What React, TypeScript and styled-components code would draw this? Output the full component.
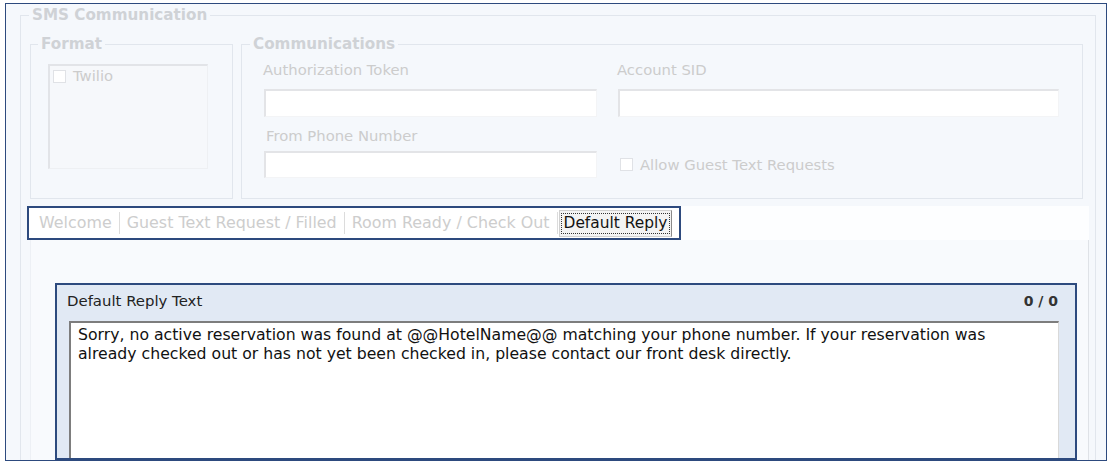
import React from "react";
import styled, { createGlobalStyle } from "styled-components";

const GlobalStyle = createGlobalStyle`
  body {
    margin: 0;
    background: #ffffff;
    font-family: "DejaVu Sans", Verdana, sans-serif;
  }
`;

const Frame = styled.div`
  box-sizing: border-box;
  margin: 3px 0 0 5px;
  width: 1102px;
  height: 458px;
  border: 1px solid #2d4a7e;
  background: #f5f8fc;
  overflow: hidden;
  display: flex;
  flex-direction: column;
`;

const GroupSet = styled.fieldset<{ $pad: string }>`
  margin: 0;
  min-width: 0;
  padding: ${(p) => p.$pad};
  border: 1px solid #e1e6ed;
  display: block;
`;

// offset is measured from the padding edge, so it goes negative when the set is padded
const Legend = styled.legend<{ $offset: number }>`
  margin-left: ${(p) => p.$offset}px;
  padding: 0 3px;
  font-family: "DejaVu Sans", Verdana, sans-serif;
  font-weight: bold;
  font-size: 15.2px;
  line-height: 18px;
  color: #cfd2d6;
`;

const SmsSet = styled(GroupSet)`
  margin: 2px 10px 0 14px;
  flex: 1;
`;

const TopRow = styled.div`
  display: flex;
  gap: 8px;
  height: 164px;
`;

const FormatSet = styled(GroupSet)`
  box-sizing: border-box;
  width: 203px;
`;

const ListBox = styled.div`
  box-sizing: border-box;
  width: 160px;
  height: 105px;
  background: #f6f8fb;
  border-top: 2px solid #e2e4e8;
  border-left: 2px solid #e2e4e8;
  border-right: 1px solid #eef0f3;
  border-bottom: 1px solid #eef0f3;
  padding: 1px 0 0 3px;
`;

const CheckRow = styled.label`
  display: flex;
  align-items: center;
  gap: 7px;
  font-size: 14.8px;
  line-height: 18px;
  color: #cccccc;
`;

const Box = styled.span`
  box-sizing: border-box;
  width: 13px;
  height: 13px;
  background: #ffffff;
  border: 1px solid #e0e2e6;
  flex: none;
`;

const CommSet = styled(GroupSet)`
  box-sizing: border-box;
  flex: 1;
`;

const FieldGrid = styled.div`
  display: grid;
  grid-template-columns: 333px 441px;
  column-gap: 21px;
`;

const Field = styled.div`
  display: flex;
  flex-direction: column;
`;

const FieldLabel = styled.div<{ $gap: number; $shift?: number }>`
  font-size: 14.8px;
  line-height: 18px;
  color: #cccccc;
  margin-left: ${(p) => p.$shift ?? -1}px;
  margin-bottom: ${(p) => p.$gap}px;
`;

const TextBox = styled.div<{ $h: number }>`
  box-sizing: border-box;
  height: ${(p) => p.$h}px;
  background: #ffffff;
  border-top: 2px solid #e3e4e7;
  border-left: 2px solid #e3e4e7;
  border-right: 1px solid #f3f4f6;
  border-bottom: 1px solid #f3f4f6;
`;

const CheckCell = styled.div`
  display: flex;
  align-items: center;
  padding: 0 0 0 2px;
`;

const TabBar = styled.div`
  margin: 7px -6px 0 -3px;
  height: 34px;
  background: #fdfeff;
  display: flex;
`;

const TabList = styled.div`
  box-sizing: border-box;
  width: 654px;
  height: 34px;
  border: 2px solid #2d4a7e;
  background: #ffffff;
  display: flex;
  align-items: center;
  padding-left: 10px;
`;

const Tab = styled.div`
  font-size: 15.9px;
  line-height: 18px;
  color: #cdcdcd;
  padding: 0 7px 0 0;
  margin-right: 7px;
  border-right: 1px solid #dcdcdc;
  height: 22px;
  display: flex;
  align-items: center;
`;

const ActiveTab = styled.div`
  box-sizing: border-box;
  height: 27px;
  margin-left: -6px;
  padding: 2px;
  background: #f3f3f3;
  border: 1px solid #d0d0d0;
  border-right: 1px solid #8a8a8a;
  display: flex;
  align-items: center;
`;

const FocusText = styled.span`
  font-size: 15.4px;
  line-height: 19px;
  color: #111111;
  padding: 0 2px;
  outline: 1px dotted #333333;
`;

const Panel = styled.div`
  margin: 0 -6px 0 0;
  padding: 43px 11px 40px 24px;
  background: #f8fafd;
  border-left: 1px solid #edf0f5;
  border-right: 1px solid #dfe2e7;
`;

const ReplyGroup = styled.div`
  box-sizing: border-box;
  height: 177px;
  border: 2px solid #2d4a7e;
  background: #e1e9f4;
  display: flex;
  flex-direction: column;
`;

const ReplyHeader = styled.div`
  display: flex;
  justify-content: space-between;
  padding: 7px 17px 0 10px;
  height: 18px;
  line-height: 18px;
  color: #222222;
`;

const HeaderTitle = styled.span`
  font-size: 14.9px;
`;

const Counter = styled.span`
  font-size: 14px;
  font-weight: bold;
  color: #333333;
`;

const ReplyText = styled.div`
  box-sizing: border-box;
  margin: 11px 16px 0 12px;
  height: 150px;
  background: #ffffff;
  border-top: 2px solid #7d7d7d;
  border-left: 2px solid #7d7d7d;
  border-right: 1px solid #d9d9d9;
  padding: 2px 24px 0 7px;
  font-size: 15.7px;
  line-height: 19px;
  color: #111111;
`;

const tabs = ["Welcome", "Guest Text Request / Filled", "Room Ready / Check Out"];

export default function App() {
  return (
    <>
      <GlobalStyle />
      <Frame>
        <SmsSet $pad="11px 12px 0 9px">
          <Legend $offset={-1}>SMS Communication</Legend>
          <TopRow>
            <FormatSet $pad="11px 0 0 17px">
              <Legend $offset={-10}>Format</Legend>
              <ListBox>
                <CheckRow>
                  <Box />
                  Twilio
                </CheckRow>
              </ListBox>
            </FormatSet>
            <CommSet $pad="8px 0 0 22px">
              <Legend $offset={-14}>Communications</Legend>
              <FieldGrid>
                <Field>
                  <FieldLabel $gap={10}>Authorization Token</FieldLabel>
                  <TextBox $h={28} />
                </Field>
                <Field>
                  <FieldLabel $gap={10}>Account SID</FieldLabel>
                  <TextBox $h={28} />
                </Field>
                <Field style={{ marginTop: 10 }}>
                  <FieldLabel $gap={6} $shift={2}>From Phone Number</FieldLabel>
                  <TextBox $h={27} />
                </Field>
                <CheckCell style={{ marginTop: 34 }}>
                  <CheckRow>
                    <Box />
                    Allow Guest Text Requests
                  </CheckRow>
                </CheckCell>
              </FieldGrid>
            </CommSet>
          </TopRow>
          <TabBar>
            <TabList>
              {tabs.map((t) => (
                <Tab key={t}>{t}</Tab>
              ))}
              <ActiveTab>
                <FocusText>Default Reply</FocusText>
              </ActiveTab>
            </TabList>
          </TabBar>
          <Panel>
            <ReplyGroup>
              <ReplyHeader>
                <HeaderTitle>Default Reply Text</HeaderTitle>
                <Counter>0 / 0</Counter>
              </ReplyHeader>
              <ReplyText>
                Sorry, no active reservation was found at @@HotelName@@ matching your phone number. If your reservation was already checked out or has not yet been checked in, please contact our front desk directly.
              </ReplyText>
            </ReplyGroup>
          </Panel>
        </SmsSet>
      </Frame>
    </>
  );
}
